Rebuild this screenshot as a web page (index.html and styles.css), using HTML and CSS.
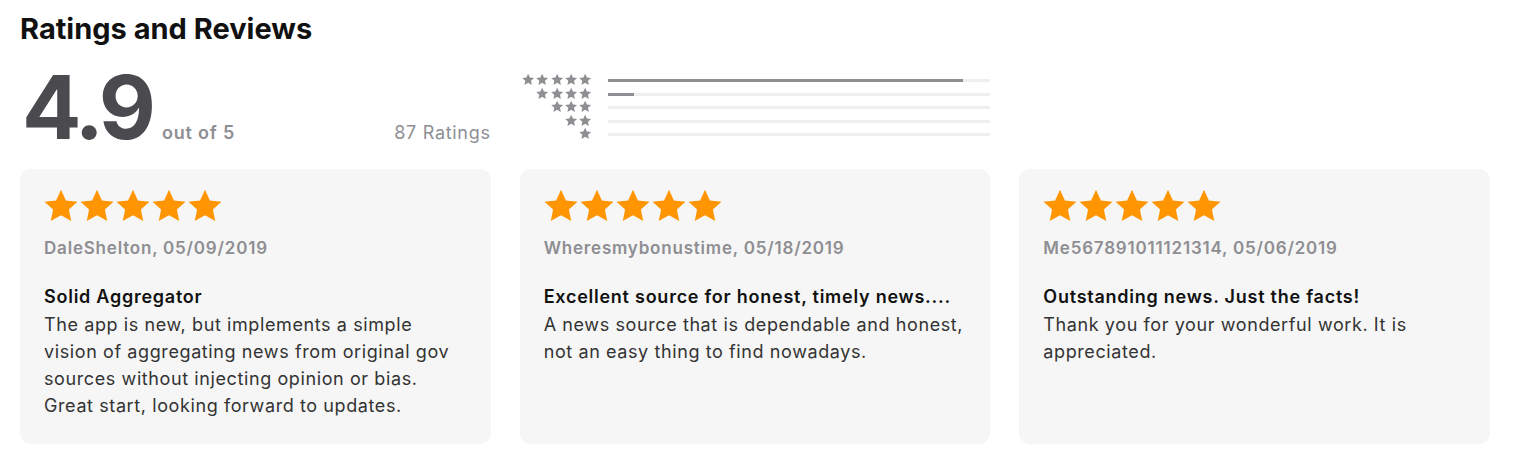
FILE: index.html
```html
<!DOCTYPE html>
<html lang="en">
<head>
<meta charset="utf-8">
<title>Ratings and Reviews</title>
<link rel="stylesheet" href="styles.css">
</head>
<body>
<svg width="0" height="0" class="defs" aria-hidden="true">
  <defs>
    <symbol id="star" viewBox="0 0 24 24">
      <path d="M12 1.2l3.25 7.05 7.75.85-5.75 5.25 1.6 7.65L12 18.1l-6.85 3.9 1.6-7.65L1 9.1l7.75-.85z"/>
    </symbol>
  </defs>
</svg>
<section class="ratings">
  <h2 class="title">Ratings and Reviews</h2>
  <div class="summary">
    <div class="score">
      <div class="score-main"><span class="score-num">4.9</span><span class="score-out">out of 5</span></div>
      <div class="score-count">87 Ratings</div>
    </div>
    <div class="hist">
      <div class="hist-row"><div class="hist-stars"><svg><use href="#star"/></svg><svg><use href="#star"/></svg><svg><use href="#star"/></svg><svg><use href="#star"/></svg><svg><use href="#star"/></svg></div><div class="bar"><div class="bar-fill" style="width:92.9%"></div></div></div>
      <div class="hist-row"><div class="hist-stars"><svg><use href="#star"/></svg><svg><use href="#star"/></svg><svg><use href="#star"/></svg><svg><use href="#star"/></svg></div><div class="bar"><div class="bar-fill" style="width:6.8%"></div></div></div>
      <div class="hist-row"><div class="hist-stars"><svg><use href="#star"/></svg><svg><use href="#star"/></svg><svg><use href="#star"/></svg></div><div class="bar"><div class="bar-fill" style="width:0%"></div></div></div>
      <div class="hist-row"><div class="hist-stars"><svg><use href="#star"/></svg><svg><use href="#star"/></svg></div><div class="bar"><div class="bar-fill" style="width:0%"></div></div></div>
      <div class="hist-row"><div class="hist-stars"><svg><use href="#star"/></svg></div><div class="bar"><div class="bar-fill" style="width:0%"></div></div></div>
    </div>
  </div>
  <div class="reviews">
    <article class="card">
      <div class="card-stars"><svg><use href="#star"/></svg><svg><use href="#star"/></svg><svg><use href="#star"/></svg><svg><use href="#star"/></svg><svg><use href="#star"/></svg></div>
      <div class="author">DaleShelton, 05/09/2019</div>
      <h3 class="card-title">Solid Aggregator</h3>
      <p class="card-body">The app is new, but implements a simple vision of aggregating news from original gov sources without injecting opinion or bias. Great start, looking forward to updates.</p>
    </article>
    <article class="card">
      <div class="card-stars"><svg><use href="#star"/></svg><svg><use href="#star"/></svg><svg><use href="#star"/></svg><svg><use href="#star"/></svg><svg><use href="#star"/></svg></div>
      <div class="author">Wheresmybonustime, 05/18/2019</div>
      <h3 class="card-title">Excellent source for honest, timely news....</h3>
      <p class="card-body">A news source that is dependable and honest, not an easy thing to find nowadays.</p>
    </article>
    <article class="card">
      <div class="card-stars"><svg><use href="#star"/></svg><svg><use href="#star"/></svg><svg><use href="#star"/></svg><svg><use href="#star"/></svg><svg><use href="#star"/></svg></div>
      <div class="author">Me567891011121314, 05/06/2019</div>
      <h3 class="card-title">Outstanding news. Just the facts!</h3>
      <p class="card-body">Thank you for your wonderful work. It is appreciated.</p>
    </article>
  </div>
</section>
</body>
</html>
```
FILE: styles.css
```css
* { box-sizing: border-box; }
html, body { margin: 0; padding: 0; background: #fff; }
body { font-family: Inter, "Noto Sans", "Liberation Sans", sans-serif; color: #1d1d1f; }
.defs { position: absolute; width: 0; height: 0; overflow: hidden; }

.ratings { padding: 11px 30px 0 20px; }

.title { margin: 0; font-size: 29px; font-weight: 700; line-height: 36px; color: #111; }

.summary, .reviews {
  display: grid;
  grid-template-columns: repeat(3, 1fr);
  column-gap: 29px;
}
.summary { height: 122px; }

.score { display: flex; justify-content: space-between; align-items: baseline; padding-top: 20px; }
.score-main { display: flex; align-items: baseline; }
.score-num { font-size: 88px; font-weight: 700; color: #4a4a4f; line-height: 80px; letter-spacing: -4px; margin-left: 2px; }
.score-out { font-size: 18px; font-weight: 600; color: #8e8e93; letter-spacing: 0.8px; margin-left: 10px; }
.score-count { font-size: 18px; color: #8e8e93; letter-spacing: 0.7px; }

.hist { padding-top: 25.75px; display: flex; flex-direction: column; }
.hist-row { display: flex; align-items: center; height: 13.5px; }
.hist-stars { width: 73px; display: flex; justify-content: flex-end; fill: #8e8e93; }
.hist-stars svg { width: 14.3px; height: 13px; }
.bar { flex: 1; margin-left: 15px; height: 3px; background: #efeff2; margin-top: 2px; border-radius: 1px; }
.bar-fill { height: 100%; background: #8e8e93; }

.card { background: #f6f6f6; border-radius: 11px; height: 275px; padding: 18px 24px 0 24px; }
.card-stars { display: flex; fill: #ff9500; height: 38px; }
.card-stars svg { width: 36px; height: 38px; margin-left: -1px; margin-right: 1px; }
.author { margin-top: 12px; font-size: 17px; font-weight: 600; color: #8e8e93; line-height: 22px; letter-spacing: 0.8px; }
.card-title { margin: 24.5px 0 0; font-size: 18px; font-weight: 600; color: #111; line-height: 26px; letter-spacing: 0.75px; }
.card-body { margin: 1.5px 0 0; font-size: 18px; color: #333; line-height: 27px; letter-spacing: 0.6px; }
```
